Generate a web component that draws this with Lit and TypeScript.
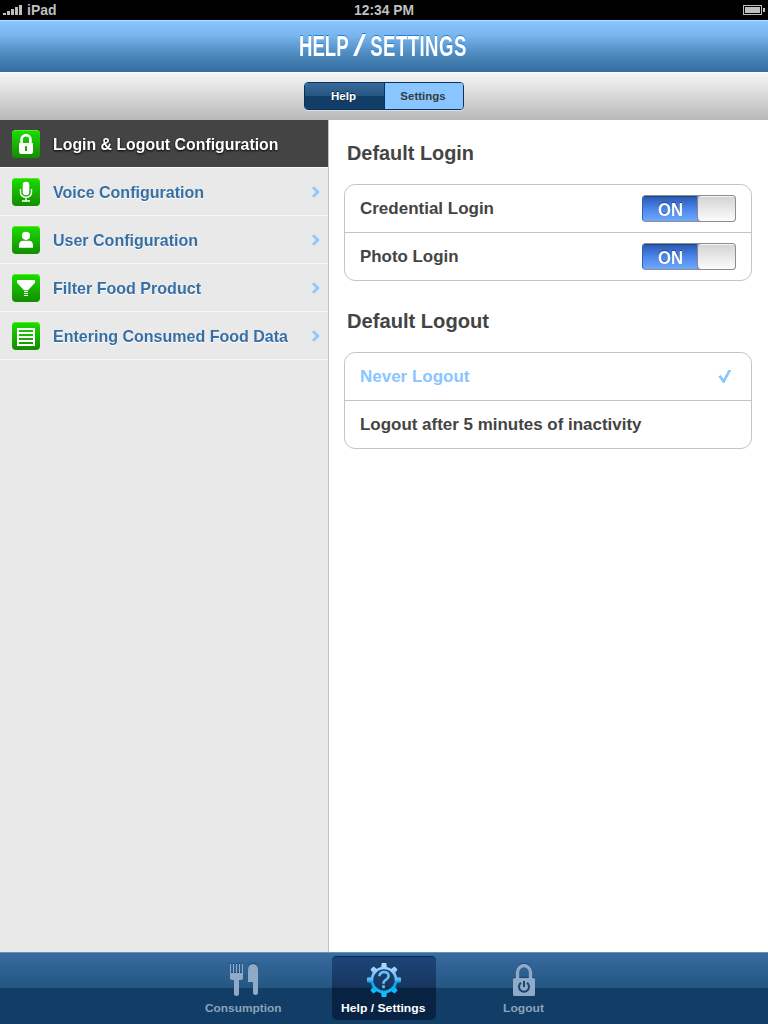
import { LitElement, html, css, svg } from "lit";
import { customElement } from "lit/decorators.js";
import { classMap } from "lit/directives/class-map.js";

const glyphs: Record<string, unknown> = {
  lock: svg`<path d="M9.600 13.500V9.600a4.400 4.400 0 0 1 8.800 0v3.900" fill="none" stroke="#fff" stroke-width="2.700"/>
    <path fill="#fff" fill-rule="evenodd" d="M7 13.700q0-.7.8-.7h12.400q.8 0 .8.7v8q0 2.300-2.300 2.300H9.300Q7 24 7 21.700zM14 16a1.300 1.300 0 0 0-1 2.100V21h2v-2.900A1.300 1.300 0 0 0 14 16z"/>`,
  mic: svg`<rect x="10.700" y="3.800" width="6.600" height="13.400" rx="3.300" fill="#fff"/>
    <path d="M8.500 11v3.500a5.500 4.800 0 0 0 11 0V11M14 19.300V22.500M10 23h8" fill="none" stroke="#fff" stroke-width="1.400"/>`,
  user: svg`<circle cx="14" cy="9.800" r="4.100" fill="#fff"/><path fill="#fff" d="M7 19.500q0-4.800 4-4.800h6q4 0 4 4.800v2.200H7z"/>`,
  filter: svg`<path fill="#fff" d="M5 6h18v2.800L16 16.200h-4L5 8.800z"/><path d="M12 17.500h4M12 19.500h4M12 21.500h4" stroke="#fff"/>`,
  list: svg`<path fill="#fff" fill-rule="evenodd" d="M5 6h18v18H5zM7 8v2h14V8zm0 4v2h14v-2zm0 4v2h14v-2zm0 4v2h14v-2z"/>`,
};

const gearTeeth = Array.from({ length: 8 }, (_, i) => {
  const a = (i * Math.PI) / 4;
  const point = ([x, y]: number[]) =>
    `${(18 + x * Math.cos(a) - y * Math.sin(a)).toFixed(2)} ${(19 + x * Math.sin(a) + y * Math.cos(a)).toFixed(2)}`;
  return "M" + [[-3, -12], [-2.2, -17], [2.2, -17], [3, -12]].map(point).join("L") + "z";
}).join("");

@customElement("app-root")
export class AppRoot extends LitElement {
  static styles = css`
    :host { display: flex; flex-direction: column; width: 768px; height: 1024px; overflow: hidden; background: #fff; color: #444;
      font: bold 17px/24px "Liberation Sans", Arial, sans-serif; }
    * { box-sizing: border-box; }
    svg { display: block; flex: none; }
    .text { overflow: visible; fill: currentColor; }
    .status { height: 20px; background: #000; color: #bfbfbf; display: grid; grid-template-columns: 1fr auto 1fr; align-items: center;
      font-size: 14px; line-height: 20px; padding: 0 3px; }
    .carrier { display: flex; gap: 5px; align-items: center; }
    .battery { justify-self: end; }
    .header { height: 52px; background: linear-gradient(#8ac6ff, #79b6ed 28%, #4f8dc2 62%, #346c9e); border-top: 1px solid #b4daff; display: flex; justify-content: center; }
    .title { font: bold 30px "Liberation Sans Narrow", "Liberation Sans", sans-serif; fill: #fff; filter: drop-shadow(0 -1px 0 #2380dc); }
    .slash { font-weight: normal; }
    .toolbar { height: 48px; background: linear-gradient(#f5f5f5, #b9b9b9); border-top: 1px solid #fff; display: flex; justify-content: center; padding-top: 9px; }
    .segments { width: 160px; height: 28px; border: 1px solid #04335f; border-radius: 4px; overflow: hidden; display: grid; grid-template-columns: 80px 1fr; text-align: center;
      font-size: 11.500px; line-height: 26px; box-shadow: 0 1px 0 #dedede; }
    .segments span { padding-right: 2px; }
    .help { background: linear-gradient(#38699a, #265681 50%, #113d66 51%); color: #fff; border-right: 1px solid #04335f; text-shadow: 0 -1px #04213d; }
    .settings { background: #89c6ff; color: #373c43; }
    .body { flex: 1; display: grid; grid-template-columns: 329px 1fr; min-height: 0; }
    .side { background: #e9e9e9; border-right: 1px solid #c2c2c2; }
    .row { height: 48px; display: flex; align-items: center; border-bottom: 1px solid #f8f8f8; padding: 1px 7px 0 12px; color: #356fa3; }
    .row .text { filter: drop-shadow(0 1px 0 #fff); }
    .row.active { background: #444; color: #fff; }
    .row.active .text { filter: drop-shadow(0 1px 1px #000); }
    .tile { width: 28px; height: 28px; border-radius: 4px; background: linear-gradient(#1bdd00, #128d00); box-shadow: inset 0 1px #5ceb16; margin-right: 12.500px; }
    .label { flex: 1; white-space: nowrap; }
    .main { padding: 20px 16px 0 15px; }
    .heading { font-size: 20px; line-height: 26px; padding-left: 2.500px; margin-bottom: 18px; }
    .card { height: 97px; border: 1px solid #c4c4c4; border-radius: 11px; margin-bottom: 27px; }
    .item { height: 47px; display: flex; align-items: center; justify-content: space-between; padding: 0 15px 1px; }
    .item + .item { height: 48px; border-top: 1px solid #c4c4c4; }
    .chosen { color: #89c6ff; }
    .toggle { width: 94px; height: 27px; border-radius: 4px; border: 1px solid #8d8d8d; border-left-color: #2e61bd; display: flex; overflow: hidden; background: #5f9cf6; }
    .on { width: 54px; background: linear-gradient(#2857b0, #4a85e8 50%, #6fa9ff); color: #fff; padding: 0 0 0 15px; box-shadow: inset 0 1px #23458b; }
    .on .text { filter: drop-shadow(0 -1px 0 #214788); }
    .knob { flex: 1; background: linear-gradient(#d3d3d3, #fcfcfc); box-shadow: inset 0 1px #f5f5f5; border-left: 1px solid #888; border-radius: 4px 0 0 4px; }
    .tabs { height: 72px; border-top: 1px solid #6693bd; background: linear-gradient(#386ba0, #235681 49%, #1b4b79 50%, #113d66 50%); display: grid; grid-template-columns: repeat(3, 104px); gap: 36px; justify-content: center; padding-top: 3px; }
    .tab { height: 64px; border-radius: 5px; display: flex; flex-direction: column; align-items: center; gap: 4px; padding: 5px 1px 0 0; color: #8aa3bb; }
    .tab.current { color: #fff; background: linear-gradient(#1d4579, #17365f 49%, #082242 50%, #092344); box-shadow: inset 0 1px #0b2950; }
    .tab .icon { filter: drop-shadow(0 -1px 0 #194472); margin-left: 1px; }
    .question { font: 23px "Liberation Sans", sans-serif; }
  `;

  private text(label: string, width: number, size = 17, height = 24, base = 18) {
    return html`<svg class="text" width=${width} height=${height}><text y=${base} font-size=${size} textLength=${width} lengthAdjust="spacingAndGlyphs">${label}</text></svg>`;
  }

  private row(icon: string, label: string, width: number, active = false) {
    return html`<div class=${classMap({ row: true, active })}>
      <svg class="tile" viewBox="0 0 28 28">${glyphs[icon]}</svg>
      <span class="label">${this.text(label, width)}</span>
      ${active ? "" : html`<svg width="10" height="12" viewBox="0 0 10 12"><path d="M2 1.200L6.800 6L2 10.800" fill="none" stroke="#89c6ff" stroke-width="2.700"/></svg>`}
    </div>`;
  }

  private toggle() {
    return html`<div class="toggle"><span class="on">${this.text("ON", 25, 17.5, 24, 19.5)}</span><span class="knob"></span></div>`;
  }

  render() {
    return html`
      <div class="status">
        <span class="carrier"><svg width="19" height="10" fill="#bfbfbf"><path d="M0 8h3v2H0zM4 6h3v4H4zM8 4h3v6H8zM12 2h3v8h-3zM16 0h3v10h-3z"/></svg>${this.text("iPad", 29.5, 14, 20, 15)}</span>
        ${this.text("12:34 PM", 60, 14, 20, 15)}
        <svg class="battery" width="22" height="10"><rect x=".5" y=".5" width="18" height="9" fill="none" stroke="#bfbfbf"/><path fill="#bfbfbf" d="M2 2h15v6H2zM20 3h2v4h-2z"/></svg>
      </div>
      <div class="header"><svg width="176" height="50"><g class="title">
        <text transform="translate(3 35) scale(.62 1)" textLength="80" lengthAdjust="spacing">HELP</text>
        <text class="slash" transform="translate(57 35)" textLength="13" lengthAdjust="spacingAndGlyphs">/</text>
        <text transform="translate(74.200 35) scale(.62 1)" textLength="155" lengthAdjust="spacing">SETTINGS</text>
      </g></svg></div>
      <div class="toolbar"><div class="segments"><span class="help">Help</span><span class="settings">Settings</span></div></div>
      <div class="body">
        <div class="side">
          ${this.row("lock", "Login & Logout Configuration", 225.5, true)}
          ${this.row("mic", "Voice Configuration", 151)}
          ${this.row("user", "User Configuration", 145)}
          ${this.row("filter", "Filter Food Product", 148)}
          ${this.row("list", "Entering Consumed Food Data", 235)}
        </div>
        <div class="main">
          <div class="heading">${this.text("Default Login", 127, 20, 26, 20)}</div>
          <div class="card">
            <div class="item">${this.text("Credential Login", 134)}${this.toggle()}</div>
            <div class="item">${this.text("Photo Login", 98.5)}${this.toggle()}</div>
          </div>
          <div class="heading">${this.text("Default Logout", 142, 20, 26, 20)}</div>
          <div class="card">
            <div class="item chosen">${this.text("Never Logout", 109.5)}<svg width="18" height="16"><path fill="#89c6ff" d="M.4 8.500l2.300-1.400 2.700 3.900L10.400 2H13.400L6.300 15H5z"/></svg></div>
            <div class="item">${this.text("Logout after 5 minutes of inactivity", 281.5)}</div>
          </div>
        </div>
      </div>
      <div class="tabs">
        <div class="tab">
          <svg class="icon" width="34" height="36" fill="#8eaac7"><path d="M3 3h1v9h2V3h1v9h2V3h1v9h2V3h1v9h2V3h1v14q0 2-2 2h-2v14q0 2-2.500 2T7 33V19H5q-2 0-2-2zM21 9q0-6 5-6t5 6v23q0 2-2.500 2T26 32V21h-5z"/></svg>
          ${this.text("Consumption", 76.5, 11.5, 14, 11)}
        </div>
        <div class="tab current">
          <svg class="icon" width="36" height="36" viewBox="0 0 36 36"><defs><linearGradient id="gear" x2="0" y2="36" gradientUnits="userSpaceOnUse"><stop offset=".1" stop-color="#b5daff"/><stop offset=".52" stop-color="#5db8f3"/><stop offset=".58" stop-color="#08a4ee"/><stop offset="1" stop-color="#14c5ff"/></linearGradient></defs>
            <circle cx="18" cy="19" r="12" stroke-width="2.600" fill="none" stroke="url(#gear)"/><path fill="url(#gear)" d=${gearTeeth}/>
            <text class="question" x="18" y="27" text-anchor="middle" fill="#6bbff7" stroke="#6bbff7" stroke-width=".5">?</text></svg>
          ${this.text("Help / Settings", 84.5, 11.5, 14, 11)}
        </div>
        <div class="tab">
          <svg class="icon" width="34" height="36"><path d="M10.500 18v-6.500a6.500 7 0 0 1 13 0V18" fill="none" stroke="#8eaac7" stroke-width="3.400"/><rect x="6" y="17" width="22" height="18" rx="1.500" fill="#8eaac7"/><path d="M14 21.800a5 5 0 1 0 6 0M17 20v6" fill="none" stroke="#194470" stroke-width="2"/></svg>
          ${this.text("Logout", 41, 11.5, 14, 11)}
        </div>
      </div>`;
  }
}
